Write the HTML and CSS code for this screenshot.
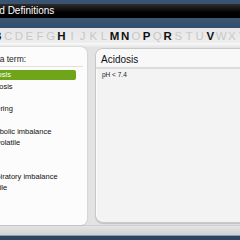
FILE: index.html
```html
<!DOCTYPE html>
<html lang="en">
<head>
    <meta charset="UTF-8">
    <meta name="viewport" content="width=device-width, initial-scale=1.0">
    <title>Acid-Base Terms and Definitions</title>
    <link rel="stylesheet" href="styles.css">
</head>
<body>
    <div class="topo"></div>
    <div class="barra-titulo">
        <span class="titulo">Acid-Base Terms and Definitions</span>
    </div>
    <div class="faixa"></div>

    <div class="alfabeto">
        <span class="ativa">A</span><span class="ativa">B</span><span>C</span><span>D</span><span>E</span><span>F</span><span>G</span><span class="ativa">H</span><span>I</span><span>J</span><span>K</span><span>L</span><span class="ativa">M</span><span class="ativa">N</span><span>O</span><span class="ativa">P</span><span>Q</span><span class="ativa">R</span><span>S</span><span>T</span><span>U</span><span class="ativa">V</span><span>W</span><span>X</span><span>Y</span><span>Z</span>
    </div>
    <div class="separador"></div>

    <div class="principal">
        <div class="lista">
            <div class="lista-titulo">Choose a term:</div>
            <ul class="termos">
                <li class="selecionado">Acidosis</li>
                <li>Alkalosis</li>
                <li>BE</li>
                <li>Buffering</li>
                <li>H+</li>
                <li>Metabolic imbalance</li>
                <li>Nonvolatile</li>
                <li>Pivot</li>
                <li>RQ</li>
                <li>Respiratory imbalance</li>
                <li>Volatile</li>
            </ul>
        </div>

        <div class="definicao">
            <div class="definicao-titulo">Acidosis</div>
            <div class="definicao-texto">pH &lt; 7.4</div>
        </div>
    </div>

    <div class="rodape"></div>
</body>
</html>
```

FILE: styles.css
```css
body {
    margin: 0;
    width: 240px;
    height: 240px;
    overflow: hidden;
    background-color: #e3e3e3;
    font-family: "Liberation Sans", Arial, sans-serif;
}

.topo {
    height: 4px;
    background-color: #3b5372;
}

.barra-titulo {
    height: 14px;
    background: linear-gradient(#2e2e2e, #000 60%);
    white-space: nowrap;
    overflow: hidden;
}

.titulo {
    display: block;
    margin-left: -90px;
    color: #fff;
    font-size: 10px;
    line-height: 14px;
}

.faixa {
    height: 10px;
    background: linear-gradient(#3d5675, #334c6a);
}

.alfabeto {
    height: 14px;
    padding-top: 1px;
    display: flex;
    justify-content: center;
    background: linear-gradient(#e6e6e6, #eeeeee);
    font-size: 11.5px;
    line-height: 14px;
}

.alfabeto span {
    flex: 0 0 10.65px;
    text-align: center;
    color: #c8c8c8;
}

.alfabeto .ativa {
    color: #111;
    font-weight: bold;
}

.separador {
    height: 4px;
    background: linear-gradient(#fafafa, #e6e6e6);
}

.principal {
    display: flex;
    gap: 8px;
    height: 178px;
}

/* lista de termos */
.lista {
    flex: 0 0 123px;
    margin-left: -36px;
    background-color: #fcfcfc;
    border-radius: 0 6px 6px 0;
    box-shadow: 0 0 2px rgba(0, 0, 0, 0.2);
}

.lista-titulo {
    margin-right: 4px;
    padding: 6.7px 0 1.3px 4px;
    border-bottom: 1px solid #e0e0e0;
    color: #222;
    font-size: 8.5px;
    line-height: 11px;
    white-space: nowrap;
}

.termos {
    list-style: none;
    margin: 0 11px 0 0;
    padding: 3.5px 0 0;
}

.termos li {
    height: 10px;
    margin-bottom: 1.25px;
    padding-left: 19px;
    color: #111;
    font-size: 7.5px;
    line-height: 10px;
    white-space: nowrap;
}

.termos .selecionado {
    background-color: #6fa51a;
    color: #fff;
    border-radius: 0 2px 2px 0;
}

/* painel da definicao */
.definicao {
    flex: 1;
    margin: 1px -20px 2px 0;
    background-color: #f3f3f3;
    border: 1px solid #c9c9c9;
    border-radius: 8px 0 0 8px;
    box-shadow: inset 1px 1px 0 #fdfdfd, 0 1px 1px rgba(0, 0, 0, 0.15);
}

.definicao-titulo {
    padding: 4.85px 5px 1.15px;
    background-color: #f8f8f8;
    border-bottom: 2px solid #dcdcdc;
    border-radius: 8px 0 0 0;
    color: #111;
    font-size: 10px;
    line-height: 12px;
}

.definicao-texto {
    padding: 1.35px 6px;
    color: #222;
    font-size: 6.5px;
    line-height: 9px;
}

.rodape {
    height: 9px;
    border-top: 1px solid #cfcfcf;
    border-bottom: 1px solid #8d9bad;
    background: linear-gradient(#e4e4e4, #d2d2d2);
    box-shadow: 0 9px 0 #2e4561;
}
```
